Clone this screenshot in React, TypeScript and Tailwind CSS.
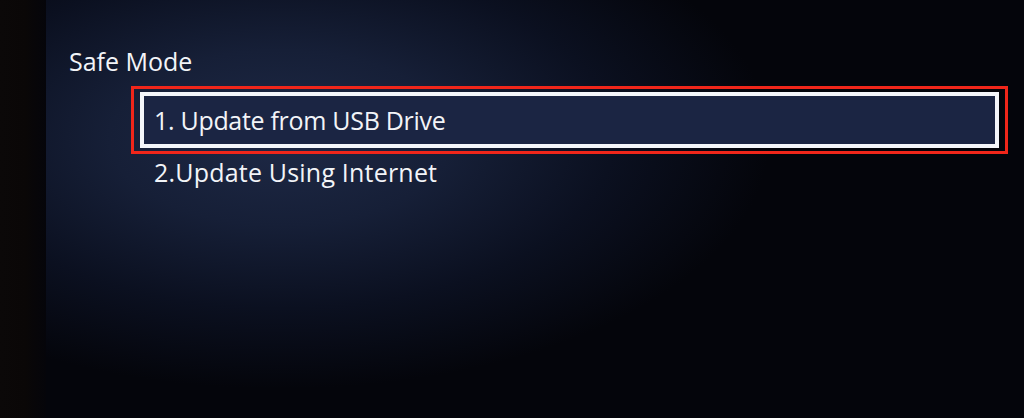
import React from 'react';

const items = [
  { label: '1. Update from USB Drive', selected: true },
  { label: '2.Update Using Internet', selected: false },
];

const App: React.FC = () => {
  return (
    <div
      className="flex h-[418px] w-[1024px] overflow-hidden bg-[#030409] text-[#f2f4f8]"
      style={{ fontFamily: '"Open Sans", "Noto Sans", sans-serif' }}
    >
      {/* Bezel strip on the left of the photo */}
      <div className="w-[46px] shrink-0 bg-[linear-gradient(90deg,#0b0808_0%,#0a0707_55%,#05050a_100%)]" />

      {/* Screen */}
      <div className="flex flex-1 flex-col bg-[radial-gradient(ellipse_50%_60%_at_24%_33%,#1e2946_0%,#161f37_35%,#0b1020_68%,#04050b_100%)] pr-[16px]">
        <div className="ml-[23px] mt-[49px] text-[25px] font-medium leading-[25px]">Safe Mode</div>

        <div className="ml-[85px] mt-[12px] flex flex-col">
          {items.map((item) =>
            item.selected ? (
              <div key={item.label} className="border-[3px] border-[#f0261a] px-[6px] py-[3px]">
                <div className="flex h-[56px] items-center border-[4px] border-[#f4f6fa] bg-[#1b2543] pl-[10px]">
                  <span className="text-[25px] font-medium leading-[26px] tracking-[-0.3px]">{item.label}</span>
                </div>
              </div>
            ) : (
              <div key={item.label} className="mt-[5px] pl-[23px] text-[25px] font-medium leading-[26px] tracking-[0.2px]">
                {item.label}
              </div>
            ),
          )}
        </div>
      </div>
    </div>
  );
};

export default App;
